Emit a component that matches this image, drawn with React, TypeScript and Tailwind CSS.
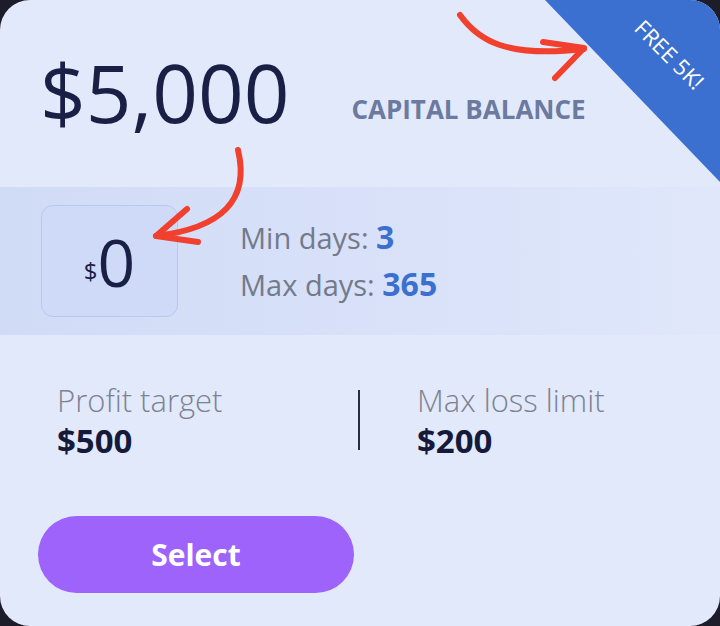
import React from 'react'

// Hand-drawn red arrows that sit over the card
function Arrows() {
  return (
    <svg className="pointer-events-none absolute inset-0" width="720" height="626" viewBox="0 0 720 626" fill="none">
      <g stroke="#f1402d" strokeWidth="6" strokeLinecap="round" strokeLinejoin="round">
        <path d="M460 15 C 478 40, 505 58, 584 49" />
        <path d="M543 42 L584 48 L555 78" />
        <path d="M238 150 C 250 200, 222 228, 156 236" />
        <path d="M187 209 L156 236 L198 242" />
      </g>
    </svg>
  )
}

export default function App() {
  return (
    <div className="h-[626px] w-[720px] bg-[#1c1c2b]" style={{ fontFamily: '"Open Sans", "Noto Sans", sans-serif' }}>
      <div className="relative h-full overflow-hidden rounded-[30px] bg-[#e2e9fb]">
        {/* corner ribbon */}
        <div className="absolute right-0 top-0 h-[182px] w-[175px] bg-[#3b70d0] [clip-path:polygon(0_0,100%_0,100%_100%)]" />
        <div className="absolute left-[608px] top-[40px] w-[124px] rotate-45 text-center text-[22px] leading-[28px] text-white">
          FREE 5K!
        </div>

        <div className="flex items-end px-10 pt-[46px]">
          <span className="text-[80px] leading-[92px] text-[#1a1f45]">$5,000</span>
          <span className="mb-[9px] ml-[62px] text-[26px] font-bold text-[#6b7a9e]">CAPITAL BALANCE</span>
        </div>

        <div className="mt-[49px] flex h-[148px] items-center bg-gradient-to-r from-[#d0dbf6] to-[#e0e7fb] pl-[41px]">
          <div className="flex h-[112px] w-[137px] items-center justify-center rounded-[12px] border border-[#b8c8f0] bg-[#cfdaf8] text-[#1a1f45]">
            <span className="mt-[20px] text-[24px]">$</span>
            <span className="text-[66px] leading-none">0</span>
          </div>
          <div className="ml-[62px] flex flex-col text-[29px] leading-[46px] text-[#737a8a]">
            <div>
              Min days: <span className="text-[32px] font-bold text-[#3b70d0]">3</span>
            </div>
            <div>
              Max days: <span className="text-[32px] font-bold text-[#3b70d0]">365</span>
            </div>
          </div>
        </div>

        <div className="mt-[44px] flex items-center px-[57px]">
          <div className="flex w-[301px] flex-col">
            <span className="text-[31px] font-light leading-[42px] text-[#7d8291]">Profit target</span>
            <span className="text-[33px] font-bold leading-[40px] text-[#161a3a]">$500</span>
          </div>
          <div className="h-[60px] w-[2px] bg-[#2a2d40]" />
          <div className="ml-[57px] flex flex-col">
            <span className="text-[31px] font-light leading-[42px] text-[#7d8291]">Max loss limit</span>
            <span className="text-[33px] font-bold leading-[40px] text-[#161a3a]">$200</span>
          </div>
        </div>

        <div className="mt-[55px] px-[38px]">
          <button className="h-[77px] w-[316px] rounded-full bg-[#9d63fa] text-[30px] font-bold text-white">
            Select
          </button>
        </div>

        <Arrows />
      </div>
    </div>
  )
}
